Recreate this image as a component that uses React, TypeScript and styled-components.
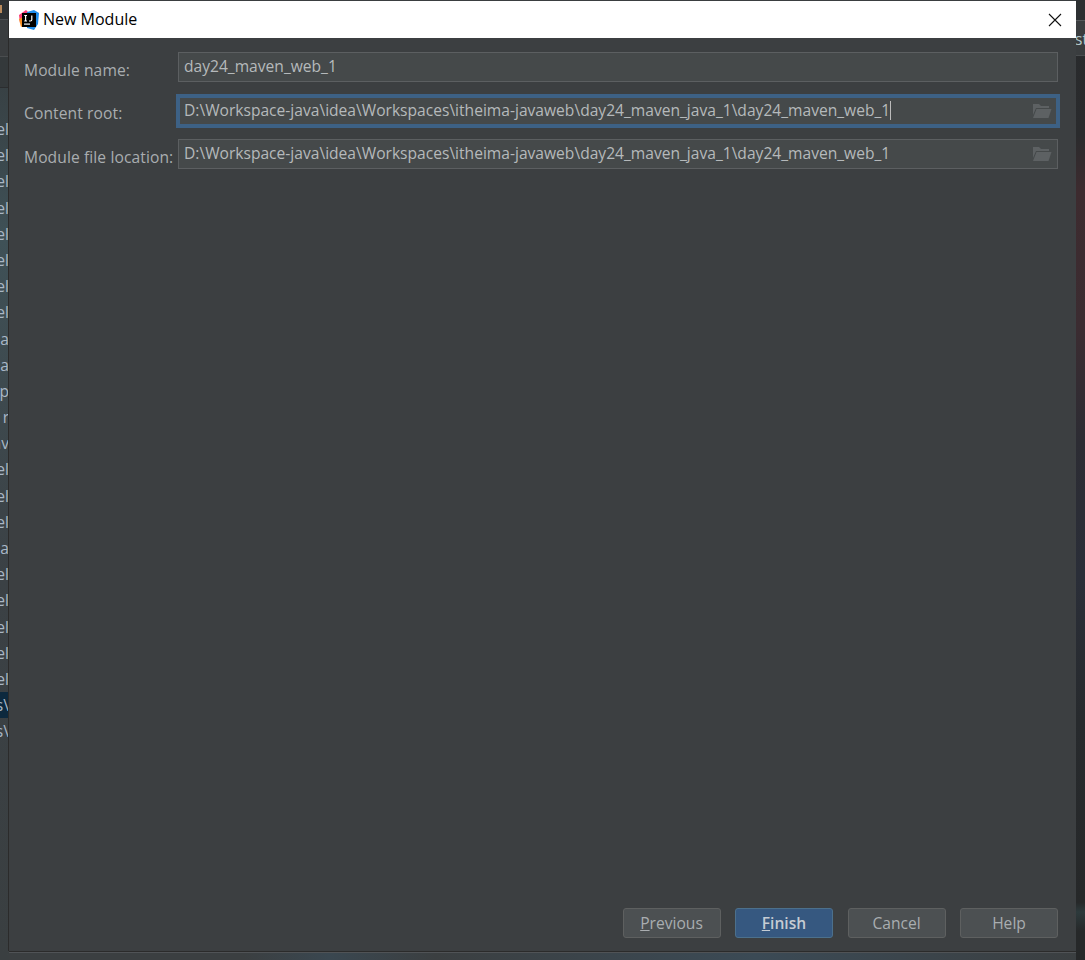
import React from "react";
import styled, { createGlobalStyle } from "styled-components";

const GlobalStyle = createGlobalStyle`
  html, body {
    margin: 0;
    padding: 0;
    background: #2f3436;
  }
  * {
    box-sizing: border-box;
  }
`;

const leftRows = [
  "el", "el", "el", "el", "el", "el", "el", "el", "a", "na", "sp", "r", "av",
  "el", "el", "el", "a", "el", "el", "el", "el", "el", "s\\", "s\\",
];

const FONT = `"Open Sans", "Noto Sans", sans-serif`;

const App = () => {
  return (
    <Page>
      <GlobalStyle />
      <Backdrop>
        <TreeColumn>
          <TopBar>
            <OrangeMark />
          </TopBar>
          <TabBand />
          <PathBand />
          <TreeList>
            {leftRows.map((text, index) => (
              <TreeRow key={index} selected={index === 22}>
                {text}
              </TreeRow>
            ))}
          </TreeList>
        </TreeColumn>
        <BottomBar>
          <BottomShadow />
        </BottomBar>
        <RightStrip>
          <RightTop />
          <StripBand>
            <StripText>st</StripText>
          </StripBand>
        </RightStrip>
      </Backdrop>
      <Dialog>
        <TitleBar>
          <AppIcon />
          <Title>New Module</Title>
          <CloseButton>
            <svg width="14" height="14" viewBox="0 0 14 14">
              <path d="M1 1 L13 13 M13 1 L1 13" stroke="#111" strokeWidth="1.1" fill="none" />
            </svg>
          </CloseButton>
        </TitleBar>
        <Body>
          <Form>
            <Row>
              <Label>Module name:</Label>
              <Field>
                <FieldText>day24_maven_web_1</FieldText>
              </Field>
            </Row>
            <Row>
              <Label>Content root:</Label>
              <Field focused>
                <FieldText>
                  D:\Workspace-java\idea\Workspaces\itheima-javaweb\day24_maven_java_1\day24_maven_web_1
                </FieldText>
                <Caret />
                <FolderIcon />
              </Field>
            </Row>
            <Row>
              <Label>Module file location:</Label>
              <Field>
                <FieldText>
                  D:\Workspace-java\idea\Workspaces\itheima-javaweb\day24_maven_java_1\day24_maven_web_1
                </FieldText>
                <FolderIcon />
              </Field>
            </Row>
          </Form>
          <Footer>
            <Button>
              <u>P</u>revious
            </Button>
            <Button primary>
              <u>F</u>inish
            </Button>
            <Button>Cancel</Button>
            <Button>Help</Button>
          </Footer>
        </Body>
      </Dialog>
    </Page>
  );
};

const AppIcon = () => (
  <svg width="20" height="20" viewBox="0 0 20 20">
    <path d="M0 5 L7 0 L11 4 L7 14 L1 13 Z" fill="#fc3a78" />
    <path d="M0 9 L4 7 L6 15 L2 17 Z" fill="#f88c1f" />
    <path d="M8 2 L15 0 L20 3 L19 14 L15 20 L8 18 Z" fill="#1f8ceb" />
    <rect x="3" y="3" width="14" height="14" fill="#000" />
    <rect x="5" y="13.5" width="6" height="1.2" fill="#fff" />
    <path d="M5.2 5.5 H8 M6.6 5.5 V11 M5.2 11 H8 M12.8 5.5 V9.8 Q12.8 11 11.4 11 H10" stroke="#fff" strokeWidth="1.2" fill="none" />
  </svg>
);

const FolderIcon = () => (
  <FolderWrap>
    <svg width="20" height="16" viewBox="0 0 20 16">
      <path d="M1 1 H7 L9 3 H17 V5 H4 L1 12 Z" fill="#5d6163" />
      <path d="M4.5 6 H19.5 L16.5 15 H1 Z" fill="#5d6163" />
    </svg>
  </FolderWrap>
);

export default App;

const Page = styled.div`
  position: relative;
  width: 1085px;
  height: 960px;
  overflow: hidden;
  background: #3a3e40;
  font-family: ${FONT};
`;

const Backdrop = styled.div`
  display: flex;
  height: 100%;
`;

const TreeColumn = styled.div`
  flex: none;
  width: 9px;
  overflow: hidden;
  background: linear-gradient(180deg, #34383a 0%, #3f5157 25%, #3e4a4f 40%, #3b4145 60%, #3a3f41 100%);
`;

const TopBar = styled.div`
  height: 20px;
  padding-top: 5px;
  background: #2e3133;
  border-bottom: 1px solid #4a4d50;
`;

const OrangeMark = styled.div`
  width: 2px;
  height: 8px;
  background: #b98a5c;
`;

const TabBand = styled.div`
  height: 37px;
  background: #3a3d3f;
  border-bottom: 1px solid #4a4d4f;
`;

const PathBand = styled.div`
  height: 31px;
  background: #34393b;
  border-bottom: 1px solid #2b2d2f;
`;

const TreeList = styled.div`
  padding-top: 28px;
`;

const TreeRow = styled.div<{ selected?: boolean }>`
  height: 26.2px;
  line-height: 26px;
  font-size: 15.6px;
  white-space: nowrap;
  color: #a9b7c6;
  display: flex;
  justify-content: flex-end;
  background: ${({ selected }) => (selected ? "#0d293e" : "transparent")};
`;

const BottomBar = styled.div`
  flex: 1;
  align-self: flex-end;
  height: 9px;
  background: linear-gradient(90deg, #3b3f41 0%, #3b3f41 22%, #3a4750 30%, #3b3f41 40%, #3b4a55 70%, #3b3f41 100%);
`;

const BottomShadow = styled.div`
  height: 2px;
  background: #2b2d2f;
  border-bottom: 1px solid #505356;
`;

const RightStrip = styled.div`
  flex: none;
  width: 9px;
  overflow: hidden;
  background: linear-gradient(
    180deg,
    #282a2c 0%,
    #2a2b2d 14%,
    #3d2b2f 20%,
    #3b2c31 34%,
    #2c2c33 46%,
    #2a2e38 60%,
    #272a2d 75%,
    #262829 94%,
    #2d3a3c 95%,
    #262829 97%
  );
`;

const RightTop = styled.div`
  height: 21px;
  background: #2d3032;
  border-bottom: 1px solid #55585a;
`;

const StripBand = styled.div`
  height: 35px;
  padding-top: 8px;
  background: #3a3d3f;
  border-bottom: 1px solid #4a4d4f;
`;

const StripText = styled.div`
  font-size: 15.6px;
  line-height: 20px;
  margin-left: -1px;
  color: #b4c8cc;
  white-space: nowrap;
`;

const Dialog = styled.div`
  position: absolute;
  left: 9px;
  top: 1px;
  width: 1067px;
  height: 950px;
  display: flex;
  flex-direction: column;
  background: #3c3f41;
  box-shadow: -1px 0 0 #2b2b2b, 0 1px 0 #2b2b2b;
`;

const TitleBar = styled.div`
  flex: none;
  height: 37px;
  display: flex;
  align-items: center;
  gap: 4px;
  padding-left: 10px;
  background: #ffffff;
`;

const Title = styled.div`
  font-size: 16px;
  margin-top: -1px;
  color: #000000;
`;

const CloseButton = styled.div`
  margin-left: auto;
  width: 42px;
  height: 37px;
  display: flex;
  align-items: center;
  justify-content: center;
`;

const Body = styled.div`
  flex: 1;
  display: flex;
  flex-direction: column;
  justify-content: space-between;
  padding: 14px 18px 13px 15px;
`;

const Form = styled.div`
  display: flex;
  flex-direction: column;
  gap: 13.5px;
`;

const Row = styled.div`
  display: flex;
  align-items: center;
  height: 30px;
`;

const Label = styled.div`
  flex: none;
  width: 154px;
  padding-top: 5px;
  font-size: 15.6px;
  letter-spacing: 0.1px;
  color: #a9adb0;
  white-space: nowrap;
`;

const Field = styled.div<{ focused?: boolean }>`
  flex: 1;
  display: flex;
  align-items: center;
  height: 30px;
  padding: 0 ${({ focused }) => (focused ? "4px" : "5px")};
  background: #45494a;
  border: ${({ focused }) => (focused ? "2px solid #3d6185" : "1px solid #5c5f61")};
  outline: ${({ focused }) => (focused ? "2px solid #3d6185" : "none")};
`;

const FieldText = styled.span`
  font-size: 15.6px;
  margin-top: -2px;
  color: #b5b9bb;
  white-space: nowrap;
`;

const Caret = styled.span`
  width: 1px;
  height: 19px;
  background: #bbbbbb;
`;

const FolderWrap = styled.span`
  margin-left: auto;
  display: flex;
`;

const Footer = styled.div`
  display: flex;
  justify-content: flex-end;
  gap: 14.5px;
`;

const Button = styled.div<{ primary?: boolean }>`
  width: 98px;
  height: 30px;
  display: flex;
  align-items: center;
  justify-content: center;
  border-radius: 3px;
  font-size: 15.6px;
  font-weight: ${({ primary }) => (primary ? 600 : 400)};
  color: ${({ primary }) => (primary ? "#c5ccd3" : "#a9adb0")};
  background: ${({ primary }) => (primary ? "#365880" : "#4c5052")};
  border: 1px solid ${({ primary }) => (primary ? "#4c708c" : "#5e6060")};
`;
